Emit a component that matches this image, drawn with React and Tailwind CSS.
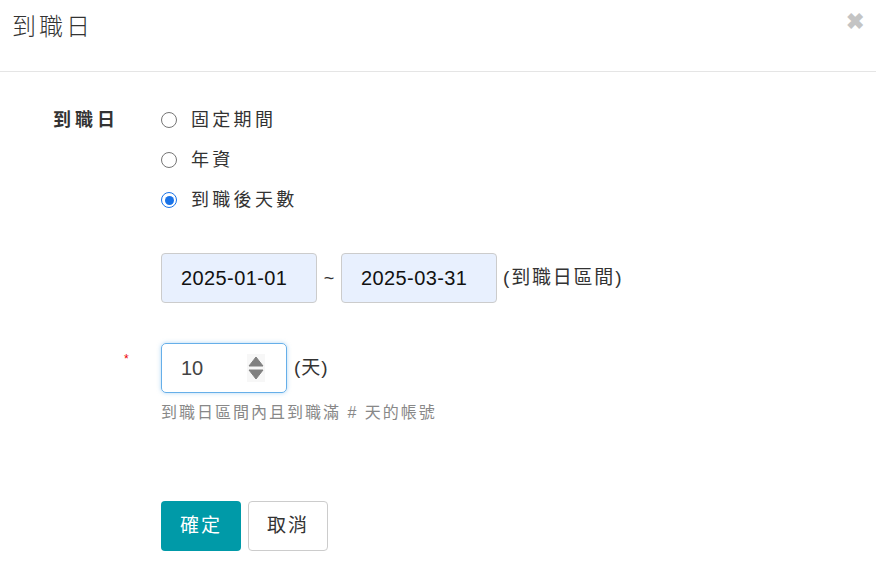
const font = { fontFamily: '"Liberation Sans", Arial, "Noto Sans CJK TC", sans-serif' };

function Radio({ checked, label }) {
  return (
    <label className="flex items-center h-[40px] cursor-pointer">
      {checked ? (
        <span className="w-[16px] h-[16px] rounded-full border-[1.5px] border-[#1a73e8] flex items-center justify-center">
          <span className="w-[9px] h-[9px] rounded-full bg-[#1a73e8]" />
        </span>
      ) : (
        <span className="w-[16px] h-[16px] rounded-full border-[1.5px] border-[#767676]" />
      )}
      <span className="ml-[14px] text-[18px] tracking-[3.3px] text-[#333]">{label}</span>
    </label>
  );
}

export default function App() {
  return (
    <div className="w-[876px] h-[580px] bg-white text-[#333] overflow-hidden" style={font}>
      {/* header */}
      <div className="h-[72px] border-b border-[#e5e5e5] flex items-start justify-between px-[12px] pt-[10px]">
        <h4 className="text-[24px] font-light tracking-[3px] text-[#333] leading-[34px]">到職日</h4>
        <button className="mt-[1px] mr-0 text-[#c4c4c4] text-[22px] font-bold leading-none">✖</button>
      </div>

      {/* body */}
      <div className="pt-[28px]">
        <div className="flex">
          <div className="w-[161px] pl-[53px] pt-[7px] text-[18px] tracking-[4px] font-bold text-[#333]">到職日</div>
          <div>
            <Radio label="固定期間" />
            <Radio label="年資" />
            <Radio checked label="到職後天數" />
          </div>
        </div>

        <div className="flex items-center mt-[33px] pl-[161px]">
          <div className="w-[156px] h-[50px] rounded-[4px] border border-[#ccc] bg-[#e8f0fe] flex items-center pl-[19px] text-[20px] tracking-[0.4px] text-[#111]">2025-01-01</div>
          <span className="w-[24px] text-center text-[18px] text-[#333]">~</span>
          <div className="w-[156px] h-[50px] rounded-[4px] border border-[#ccc] bg-[#e8f0fe] flex items-center pl-[19px] text-[20px] tracking-[0.4px] text-[#111]">2025-03-31</div>
          <span className="ml-[6px] text-[19px] tracking-[1.8px] text-[#333]">(到職日區間)</span>
        </div>

        <div className="flex mt-[40px]">
          <div className="w-[161px] pl-[124px] pt-[10px] text-[#e00] text-[12px] leading-none">*</div>
          <div>
            <div className="flex items-center">
              <div className="w-[126px] h-[50px] rounded-[5px] border border-[#66afe9] shadow-[0_0_4px_rgba(102,175,233,0.5)] flex items-center pl-[19px] pr-[21px] justify-between text-[20px] text-[#444]">
                <span>10</span>
                <svg width="18" height="28" viewBox="0 0 18 28" className="bg-[#f7f7f7]">
                  <path d="M9 3 L16 12 L2 12 Z" fill="#808080" strokeLinejoin="round" stroke="#808080" strokeWidth="1" />
                  <path d="M9 25 L16 16 L2 16 Z" fill="#808080" strokeLinejoin="round" stroke="#808080" strokeWidth="1" />
                </svg>
              </div>
              <span className="ml-[7px] text-[19px] tracking-[1px] text-[#333]">(天)</span>
            </div>
            <div className="mt-[8px] text-[16px] tracking-[2px] text-[#888]">到職日區間內且到職滿 # 天的帳號</div>
          </div>
        </div>

        <div className="flex gap-[7px] pl-[161px] mt-[76px]">
          <button className="w-[80px] h-[50px] rounded-[4px] bg-[#009aa8] text-white text-[19px] tracking-[2px]">確定</button>
          <button className="w-[80px] h-[50px] rounded-[4px] border border-[#ccc] bg-white text-[#333] text-[19px] tracking-[2px]">取消</button>
        </div>
      </div>
    </div>
  );
}
